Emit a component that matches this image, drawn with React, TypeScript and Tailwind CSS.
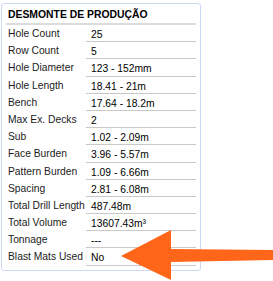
const rows: [string, string][] = [
  ["Hole Count", "25"],
  ["Row Count", "5"],
  ["Hole Diameter", "123 - 152mm"],
  ["Hole Length", "18.41 - 21m"],
  ["Bench", "17.64 - 18.2m"],
  ["Max Ex. Decks", "2"],
  ["Sub", "1.02 - 2.09m"],
  ["Face Burden", "3.96 - 5.57m"],
  ["Pattern Burden", "1.09 - 6.66m"],
  ["Spacing", "2.81 - 6.08m"],
  ["Total Drill Length", "487.48m"],
  ["Total Volume", "13607.43m³"],
  ["Tonnage", "---"],
  ["Blast Mats Used", "No"],
];

export default function App() {
  return (
    <div className="relative w-[273px] h-[281px] bg-white overflow-hidden font-['Liberation_Sans',Arial,sans-serif] text-[#1c1c1c]">
      <div className="ml-[1px] mt-[3px] w-[200px] h-[268px] rounded-[3px] border border-[#cdd8f4] px-[4px]">
        <div className="h-[21px] border-b-2 border-[#dcdcdc] pl-[2px] pt-[5px] text-[10.4px] leading-[12px] font-bold text-black">
          DESMONTE DE PRODUÇÃO
        </div>
        {rows.map(([label, value]) => (
          <div key={label} className="flex h-[17.2px] text-[10.3px] leading-[16px]">
            <div className="w-[80px] pl-[2px] pt-[1px] whitespace-nowrap">{label}</div>
            <div className="flex-1 border-b border-[#c9c9c9] pl-[5px] pt-[2px] text-black">{value}</div>
          </div>
        ))}
      </div>
      <svg className="absolute left-0 top-0" width="273" height="281" viewBox="0 0 273 281">
        <polygon
          points="121,256 171,230 171,249 273,250 273,260 171,262 171,280"
          fill="#ff6619"
        />
      </svg>
    </div>
  );
}
